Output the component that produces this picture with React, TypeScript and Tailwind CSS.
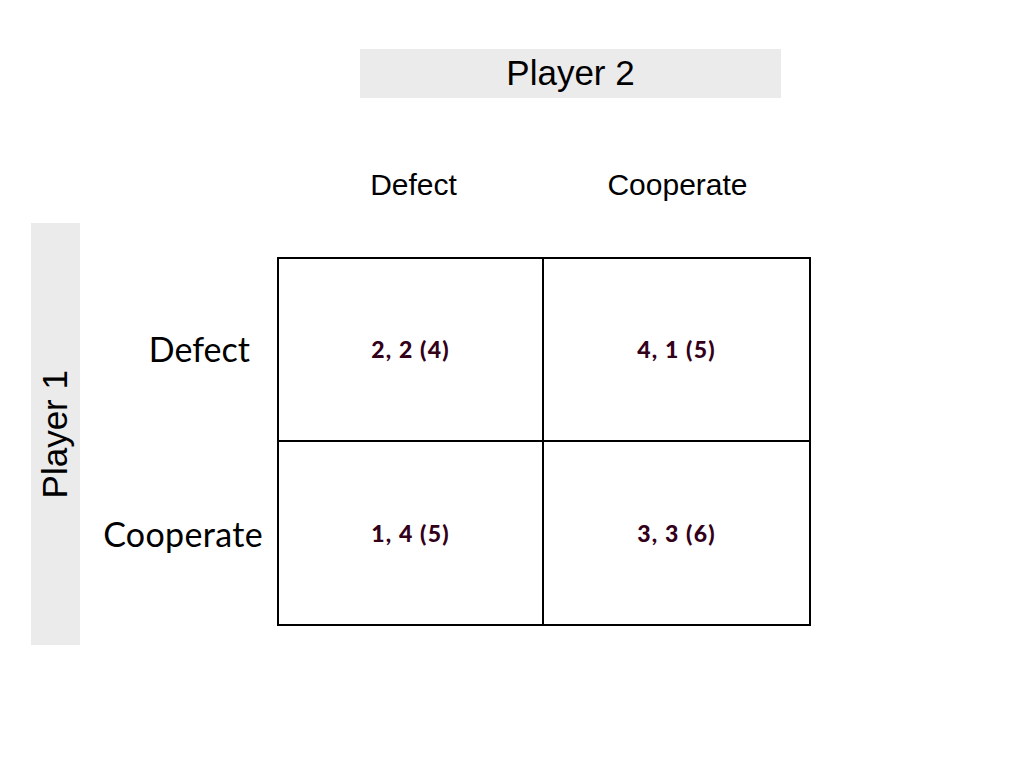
const sans = "font-['Liberation_Sans',Arial,sans-serif]";
const gill = "font-['Lato','Open_Sans',sans-serif]";

type Cell = { text: string; border: string };

const cells: Cell[] = [
  { text: "2, 2 (4)", border: "border-r-2 border-b-2" },
  { text: "4, 1 (5)", border: "border-b-2" },
  { text: "1, 4 (5)", border: "border-r-2" },
  { text: "3, 3 (6)", border: "" },
];

export default function App() {
  return (
    <div className="w-[1024px] h-[768px] bg-white flex flex-col text-black">
      {/* Player 2 banner */}
      <div
        className={`ml-[360px] mt-[49px] w-[421px] h-[49px] bg-[#ebebeb] flex items-center justify-center text-[35px] ${sans}`}
      >
        Player 2
      </div>

      {/* column headers */}
      <div className={`ml-[277px] mt-[69px] w-[534px] h-[34px] flex items-center text-[30px] ${sans}`}>
        <div className="w-1/2 text-center pl-[6px]">Defect</div>
        <div className="w-1/2 text-center">Cooperate</div>
      </div>

      <div className="flex mt-[22px]">
        {/* Player 1 banner */}
        <div
          className={`ml-[31px] w-[49px] h-[422px] bg-[#ebebeb] flex items-center justify-center text-[35px] ${sans}`}
        >
          <span className="-rotate-90 whitespace-nowrap block">Player 1</span>
        </div>

        {/* row labels */}
        <div className={`w-[197px] pt-[34px] flex flex-col text-[34px] ${gill}`}>
          <div className="h-[183px] flex items-center justify-end pr-[27px]">Defect</div>
          <div className="h-[186px] flex items-center justify-end pr-[14px] tracking-[0.01em]">Cooperate</div>
        </div>

        {/* payoff matrix */}
        <div className="mt-[34px] w-[534px] h-[369px] border-2 border-black grid grid-cols-2 grid-rows-2">
          {cells.map((c) => (
            <div
              key={c.text}
              className={`${c.border} border-black flex items-center justify-center text-[23px] tracking-[0.05em] font-black text-[#33001a] ${gill}`}
            >
              {c.text}
            </div>
          ))}
        </div>
      </div>
    </div>
  );
}
